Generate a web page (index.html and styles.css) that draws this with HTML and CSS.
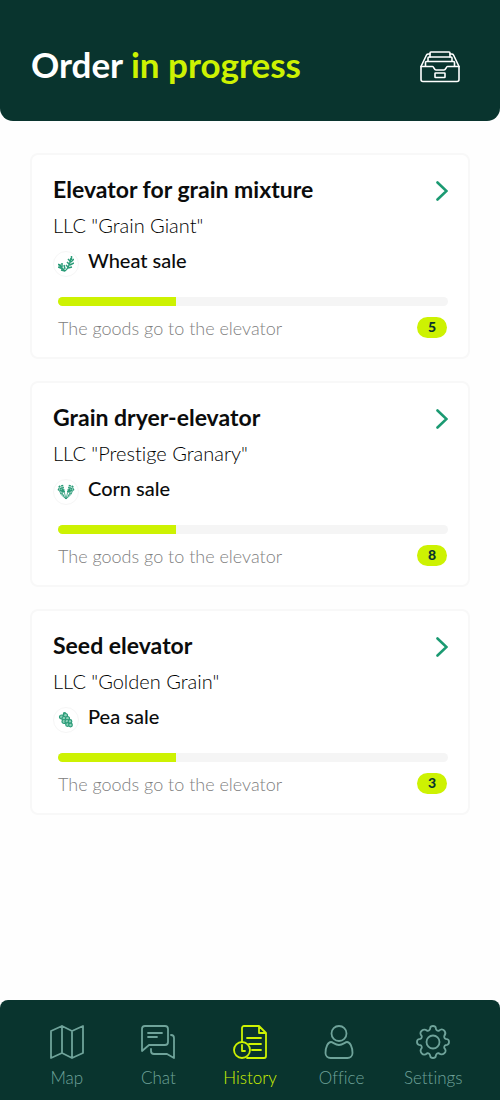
FILE: index.html
```html
<!DOCTYPE html>
<html lang="en">
<head>
<meta charset="utf-8">
<meta name="viewport" content="width=device-width, initial-scale=1">
<title>Order in progress</title>
<link rel="stylesheet" href="styles.css">
</head>
<body>
<svg class="sprite" width="0" height="0" aria-hidden="true">
  <symbol id="chevron" viewBox="0 0 12 20"><path d="M1.5 1.5 10.5 10l-9 8.500" fill="none" stroke="currentColor" stroke-width="2.6" stroke-linecap="round"/></symbol>
</svg>
<header class="top">
  <h1 class="top-title">Order <span class="accent">in progress</span></h1>
  <button class="archive" type="button" aria-label="Archive">
    <svg width="40" height="32" viewBox="0 0 40 32" fill="none" stroke="currentColor" stroke-width="1.6" stroke-linejoin="round" stroke-linecap="round">
      <path d="M1 15.500h11.500c1.500 0 1.500 3.500 3.500 3.500h8c2 0 2-3.500 3.500-3.500H39V28.500a2 2 0 0 1-2 2H3a2 2 0 0 1-2-2z"/>
      <path d="M1 15.500 6.500 4q.5-1 2-1H10M39 15.500 33.500 4q-.5-1-2-1H30"/>
      <path d="M10 6V2q0-1 1-1h18q1 0 1 1v4"/>
      <path d="M8 10V7q0-1 1-1h22q1 0 1 1v3"/>
      <path d="M5.500 15v-3.500q0-1 1-1h27q1 0 1 1V15"/>
      <rect x="15" y="22" width="10" height="4.500" rx=".5"/>
    </svg>
  </button>
</header>

<main class="orders">
  <article class="card">
    <div class="card-head">
      <h2 class="card-title">Elevator for grain mixture</h2>
      <a class="open" href="#" aria-label="Open Elevator for grain mixture"><svg width="12" height="20"><use href="#chevron"/></svg></a>
    </div>
    <p class="company">LLC "Grain Giant"</p>
    <p class="sale">
      <span class="crop"><svg width="16" height="16" viewBox="0 0 16 16" fill="none" stroke="currentColor">
        <path d="M7 15C5 13 3 11.500 1.500 8M7 15c4-3 5-7 6-13" stroke-width="1.500"/>
        <path d="M0 8l3 3M0 11l5 2M3 14l4 1M4 7l0 4M6 9l1 4M9 6l3 3M8 9l3 3M10 3l3 3M16 3l-3 3M16 7l-4 2M14 11l-4 1M13.500 0v4" stroke-width="1.500"/>
      </svg></span>Wheat sale
    </p>
    <div class="progress" role="progressbar" aria-valuenow="30" aria-valuemin="0" aria-valuemax="100" aria-label="Order progress"><span class="fill" style="width:30.3%"></span></div>
    <div class="status"><p class="note">The goods go to the elevator</p><span class="badge">5</span></div>
  </article>

  <article class="card">
    <div class="card-head">
      <h2 class="card-title">Grain dryer-elevator</h2>
      <a class="open" href="#" aria-label="Open Grain dryer-elevator"><svg width="12" height="20"><use href="#chevron"/></svg></a>
    </div>
    <p class="company">LLC "Prestige Granary"</p>
    <p class="sale">
      <span class="crop"><svg width="18" height="16" viewBox="0 0 18 16" fill="none" stroke="currentColor">
        <path d="M2 2 7 8M16 2l-5 6M5 1l2 7M13 1l-2 7M1 5l6 3M17 5l-6 3" stroke-width="2.200" stroke-dasharray="1.600 .6"/>
        <path d="M2 6q1 5 7 9 6-4 7-9M4 6q1 5 5 9 4-4 5-9M7 7l2 8 2-8M3 9q3 0 4 3M15 9q-3 0-4 3" stroke-width=".8"/>
      </svg></span>Corn sale
    </p>
    <div class="progress" role="progressbar" aria-valuenow="30" aria-valuemin="0" aria-valuemax="100" aria-label="Order progress"><span class="fill" style="width:30.3%"></span></div>
    <div class="status"><p class="note">The goods go to the elevator</p><span class="badge">8</span></div>
  </article>

  <article class="card">
    <div class="card-head">
      <h2 class="card-title">Seed elevator</h2>
      <a class="open" href="#" aria-label="Open Seed elevator"><svg width="12" height="20"><use href="#chevron"/></svg></a>
    </div>
    <p class="company">LLC "Golden Grain"</p>
    <p class="sale">
      <span class="crop"><svg width="16" height="16" viewBox="0 0 16 16" fill="#8fd0b9" stroke="currentColor" stroke-width="1.2">
        <path d="M5 3 6 .6 8 1"/>
        <circle cx="7.500" cy="3.500" r="2"/><circle cx="3.500" cy="5" r="2"/><circle cx="6" cy="6.500" r="2"/><circle cx="9.500" cy="6.500" r="2"/><circle cx="6" cy="9.500" r="2"/><circle cx="9" cy="9.500" r="2"/><circle cx="12" cy="9.500" r="1.800"/><circle cx="9.500" cy="12.500" r="1.800"/><circle cx="12.500" cy="13" r="1.800"/>
      </svg></span>Pea sale
    </p>
    <div class="progress" role="progressbar" aria-valuenow="30" aria-valuemin="0" aria-valuemax="100" aria-label="Order progress"><span class="fill" style="width:30.3%"></span></div>
    <div class="status"><p class="note">The goods go to the elevator</p><span class="badge">3</span></div>
  </article>
</main>

<nav class="tabs" aria-label="Main">
  <a class="tab" href="#">
    <svg class="tab-icon" viewBox="0 0 34 34"><path d="M1 6 12 1v27L1 33zM12 1l10 5v27l-10-5zM22 6l11-5v27l-11 5z"/></svg>
    Map
  </a>
  <a class="tab" href="#">
    <svg class="tab-icon" viewBox="0 0 34 34"><path d="M4 1h20a3 3 0 0 1 3 3v13a3 3 0 0 1-3 3H8l-7 6V4a3 3 0 0 1 3-3zM7 8h14M7 12h9M30 10a3 3 0 0 1 3 3v20l-7-4H13a3 3 0 0 1-3-3v-2"/></svg>
    Chat
  </a>
  <a class="tab tab-active" href="#" aria-current="page">
    <svg class="tab-icon" viewBox="0 0 34 34"><path d="M9 17V3a2 2 0 0 1 2-2h15l7 7v23a2 2 0 0 1-2 2H14M26 1v7h7M14 13h14M16 19h12M19 25h9M9 20v6h3"/><circle cx="9" cy="25" r="8"/></svg>
    History
  </a>
  <a class="tab" href="#">
    <svg class="tab-icon" viewBox="3 0 34 34"><circle cx="17" cy="8.500" r="7.500"/><path d="M9 17c2 0 4 3 8 3s6-3 8-3c3 0 5.500 5 5.500 11a5 5 0 0 1-5 5h-17a5 5 0 0 1-5-5c0-6 2.500-11 5.500-11z"/></svg>
    Office
  </a>
  <a class="tab" href="#">
    <svg class="tab-icon" viewBox="-17 -17 34 34"><circle r="6.500"/><path d="M-2.800-14Q-2.500-16 0-16T2.800-14Q3-11 5.800-11.200 9-14 11.300-11.300T11.200-5.800Q11-3 14-2.800 16-2.500 16 0T14 2.800Q11 3 11.200 5.800 14 9 11.300 11.300T5.800 11.200Q3 11 2.800 14 2.500 16 0 16T-2.800 14Q-3 11-5.800 11.200-9 14-11.300 11.300T-11.200 5.800Q-11 3-14 2.800-16 2.500-16 0T-14-2.800Q-11-3-11.200-5.800-14-9-11.300-11.300T-5.800-11.200Q-3-11-2.800-14z"/></svg>
    Settings
  </a>
</nav>
</body>
</html>
```
FILE: styles.css
```css
* {
  box-sizing: border-box;
}

body {
  margin: 0;
  min-height: 100vh;
  display: flex;
  flex-direction: column;
  background: #fefefe;
  color: #0b0c0c;
  font-family: Lato, "Open Sans", sans-serif;
  font-variant-ligatures: none;
}

h1, h2, p {
  margin: 0;
}

.sprite {
  position: absolute;
}

.top {
  display: flex;
  align-items: center;
  justify-content: space-between;
  padding: 42px 40px 35px 31px;
  border-radius: 0 0 13px 13px;
  background: #09342e;
  color: #fff;
}

.top-title {
  font-size: 35px;
  line-height: 44px;
  font-weight: 700;
}

.accent {
  color: #cdf202;
}

.archive {
  display: flex;
  padding: 6px 0 0;
  border: 0;
  background: none;
  color: #fff;
}

.orders {
  flex: 1;
  display: flex;
  flex-direction: column;
  gap: 22px;
  padding: 32px 30px;
}

.card {
  padding: 20px 20px 18px 21px;
  border: 2px solid #f8f8f8;
  border-radius: 8px;
  background: #fff;
}

.card-head {
  display: flex;
  align-items: center;
  justify-content: space-between;
  height: 28px;
}

.card-title {
  font-size: 23px;
  line-height: 28px;
  font-weight: 700;
}

.open {
  display: flex;
  padding-top: 3px;
  color: #1b9a72;
}

.company {
  margin-top: 8px;
  font-size: 20px;
  line-height: 28px;
  font-weight: 300;
  color: #000;
}

.sale {
  display: flex;
  align-items: flex-start;
  gap: 9px;
  margin-top: 8px;
  font-size: 20px;
  line-height: 26px;
  font-weight: 500;
}

.crop {
  display: flex;
  align-items: center;
  justify-content: center;
  width: 26px;
  height: 26px;
  margin-top: 4px;
  border: 1px solid #f6f6f6;
  border-radius: 50%;
  color: #2b9c78;
}

.progress {
  height: 9px;
  margin: 20px 0 0 5px;
  border-radius: 5px;
  background: #f5f5f5;
  overflow: hidden;
}

.fill {
  display: block;
  height: 100%;
  background: #cdf202;
}

.status {
  display: flex;
  justify-content: space-between;
  margin: 11px 1px 0 5px;
}

.note {
  color: #808080;
  font-size: 18px;
  line-height: 22px;
  font-weight: 300;
}

.badge {
  width: 30px;
  height: 21px;
  border-radius: 11px;
  background: #cdf202;
  color: #09342e;
  font-size: 14px;
  line-height: 20px;
  font-weight: 900;
  text-align: center;
}

.tabs {
  display: grid;
  grid-template-columns: repeat(5, 1fr);
  padding: 25px 21px 10px;
  border-radius: 8px 8px 0 0;
  background: #09342e;
}

.tab {
  display: flex;
  flex-direction: column;
  align-items: center;
  gap: 7px;
  color: #6fa39a;
  font-size: 17px;
  line-height: 24px;
  font-weight: 300;
  text-decoration: none;
}

.tab-active {
  color: #cdf202;
}

.tab-icon {
  width: 34px;
  height: 34px;
  fill: none;
  stroke: currentColor;
  stroke-width: 1.8;
  stroke-linecap: round;
  stroke-linejoin: round;
  overflow: visible;
}
```
